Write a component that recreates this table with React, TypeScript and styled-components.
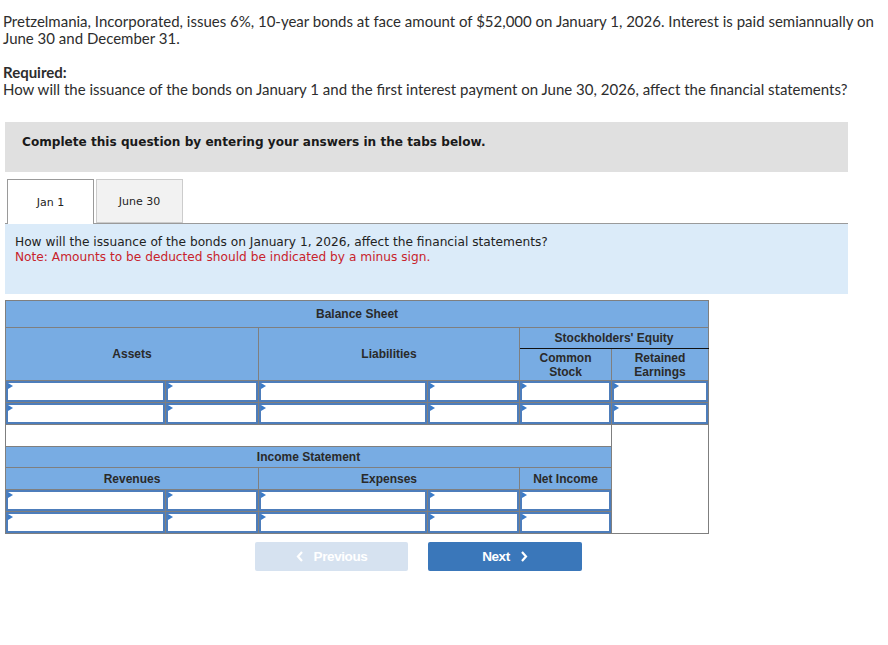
import styled, { createGlobalStyle } from "styled-components";

const GlobalStyle = createGlobalStyle`
  html, body {
    margin: 0;
    padding: 0;
    background: #ffffff;
  }
  body {
    font-family: "Lato", "Liberation Sans", sans-serif;
    color: #2b2b2b;
  }
`;

const Page = styled.div`
  width: 888px;
  padding: 13px 0 0 0;
  box-sizing: border-box;
`;

const Prompt = styled.div`
  padding-left: 3px;
  width: 875px;
  font-size: 15px;
  line-height: 17px;
  color: #2d2d2d;

  p {
    margin: 0 0 17px 0;
  }
  strong {
    font-weight: 700;
  }
`;

const Main = styled.div`
  margin: 24px 40px 0 5px;
  font-family: "DejaVu Sans", Verdana, sans-serif;
`;

const Banner = styled.div`
  height: 50px;
  box-sizing: border-box;
  background: #e0e0e0;
  padding: 13px 0 0 17px;
  font-size: 12.1px;
  line-height: 15px;
  font-weight: 700;
  color: #1a1a1a;
`;

const TabBar = styled.div`
  display: flex;
  gap: 2px;
  margin-top: 7px;
  padding-left: 2px;
  border-bottom: 1px solid #9a9a9a;
  height: 44px;
`;

const Tab = styled.div<{ $active?: boolean }>`
  width: 87px;
  height: ${(p) => (p.$active ? "45px" : "44px")};
  box-sizing: border-box;
  display: flex;
  align-items: center;
  justify-content: center;
  padding-top: ${(p) => (p.$active ? "0" : "1px")};
  font-size: 11px;
  color: #222;
  background: ${(p) => (p.$active ? "#ffffff" : "#f2f2f2")};
  border: 1px solid ${(p) => (p.$active ? "#9a9a9a" : "#cccccc")};
  border-bottom: ${(p) => (p.$active ? "none" : "1px solid #cccccc")};
`;

const Info = styled.div`
  height: 70px;
  background: #dbebf9;
  padding: 11px 10px 0 10px;
  box-sizing: border-box;
  font-size: 12.2px;
  line-height: 15px;
  color: #222;
`;

const Note = styled.div`
  color: #c8232c;
`;

const Sheet = styled.table`
  margin-top: 6px;
  border-collapse: collapse;
  table-layout: fixed;
  width: 703px;
  font-family: "Liberation Sans", Arial, sans-serif;
  font-size: 12px;
  border: 1px solid #7f7f7f;
`;

const Head = styled.th<{ $h?: number; $rule?: boolean }>`
  background: #78ace3;
  border: 1px solid #7f7f7f;
  border-bottom: ${(p) => (p.$rule ? "1px solid #111" : "1px solid #7f7f7f")};
  height: ${(p) => (p.$h ? `${p.$h}px` : "auto")};
  padding: 0;
  font-weight: 700;
  color: #2a2a2a;
  line-height: 14px;
  text-align: center;
  vertical-align: middle;
`;

const Cell = styled.td`
  padding: 0;
  height: 21px;
  border: 1px solid #7f7f7f;
  background: #fff;
`;

const Blank = styled.td`
  padding: 0;
  height: 21px;
  border: 1px solid #7f7f7f;
  background: #fff;
`;

const Field = styled.div`
  position: relative;
  height: 21px;
`;

const Input = styled.input`
  width: 100%;
  height: 100%;
  box-sizing: border-box;
  border: 2px solid #4d7dbb;
  margin: 0;
  padding: 0 4px;
  background: #fff;
  outline: none;
`;

const Marker = styled.span`
  position: absolute;
  left: 2px;
  top: 2px;
  width: 0;
  height: 0;
  border-left: 5px solid #3b7bc8;
  border-top: 3px solid transparent;
  border-bottom: 3px solid transparent;
`;

const Actions = styled.div`
  display: flex;
  gap: 20px;
  margin: 8px 0 0 250px;
`;

const NavButton = styled.button<{ $primary?: boolean }>`
  width: ${(p) => (p.$primary ? "154px" : "153px")};
  height: 29px;
  border: none;
  border-radius: 2px;
  background: ${(p) => (p.$primary ? "#3a77ba" : "#d6e2f0")};
  color: #fff;
  font-family: "Liberation Sans", Arial, sans-serif;
  font-size: 13.5px;
  font-weight: 700;
  letter-spacing: -0.4px;
  display: flex;
  align-items: center;
  justify-content: center;
  gap: 10px;
  cursor: ${(p) => (p.$primary ? "pointer" : "default")};
`;

const Chevron = ({ dir }: { dir: "left" | "right" }) => (
  <svg width="8" height="11" viewBox="0 0 8 11">
    <polyline
      points={dir === "left" ? "6,1 2,5.5 6,10" : "2,1 6,5.5 2,10"}
      fill="none"
      stroke="#fff"
      strokeWidth="2.2"
    />
  </svg>
);

const Entry = () => (
  <Cell>
    <Field>
      <Input />
      <Marker />
    </Field>
  </Cell>
);

const App = () => {
  return (
    <>
      <GlobalStyle />
      <Page>
        <Prompt>
          <p>
            Pretzelmania, Incorporated, issues 6%, 10-year bonds at face amount of
            $52,000 on January 1, 2026. Interest is paid semiannually on June 30 and
            December 31.
          </p>
          <div>
            <strong>Required:</strong>
          </div>
          <div>
            How will the issuance of the bonds on January 1 and the first interest
            payment on June 30, 2026, affect the financial statements?
          </div>
        </Prompt>

        <Main>
          <Banner>Complete this question by entering your answers in the tabs below.</Banner>

          <TabBar>
            <Tab $active>Jan 1</Tab>
            <Tab>June 30</Tab>
          </TabBar>

          <Info>
            <div>How will the issuance of the bonds on January 1, 2026, affect the financial statements?</div>
            <Note>Note: Amounts to be deducted should be indicated by a minus sign.</Note>
          </Info>

          <Sheet>
            <colgroup>
              <col style={{ width: 160 }} />
              <col style={{ width: 93 }} />
              <col style={{ width: 169 }} />
              <col style={{ width: 92 }} />
              <col style={{ width: 92 }} />
              <col style={{ width: 97 }} />
            </colgroup>
            <tbody>
              <tr>
                <Head colSpan={6} $h={26}>Balance Sheet</Head>
              </tr>
              <tr>
                <Head colSpan={2} rowSpan={2}>Assets</Head>
                <Head colSpan={2} rowSpan={2}>Liabilities</Head>
                <Head colSpan={2} $h={20} $rule>Stockholders' Equity</Head>
              </tr>
              <tr>
                <Head $h={31}>Common<br />Stock</Head>
                <Head>Retained<br />Earnings</Head>
              </tr>
              {[0, 1].map((r) => (
                <tr key={`bs${r}`}>
                  <Entry />
                  <Entry />
                  <Entry />
                  <Entry />
                  <Entry />
                  <Entry />
                </tr>
              ))}
              <tr>
                <Blank colSpan={5} />
                <Blank rowSpan={5} />
              </tr>
              <tr>
                <Head colSpan={5} $h={20}>Income Statement</Head>
              </tr>
              <tr>
                <Head colSpan={2} $h={21}>Revenues</Head>
                <Head colSpan={2}>Expenses</Head>
                <Head>Net Income</Head>
              </tr>
              {[0, 1].map((r) => (
                <tr key={`is${r}`}>
                  <Entry />
                  <Entry />
                  <Entry />
                  <Entry />
                  <Entry />
                </tr>
              ))}
            </tbody>
          </Sheet>

          <Actions>
            <NavButton disabled>
              <Chevron dir="left" />
              Previous
            </NavButton>
            <NavButton $primary>
              Next
              <Chevron dir="right" />
            </NavButton>
          </Actions>
        </Main>
      </Page>
    </>
  );
};

export default App;
